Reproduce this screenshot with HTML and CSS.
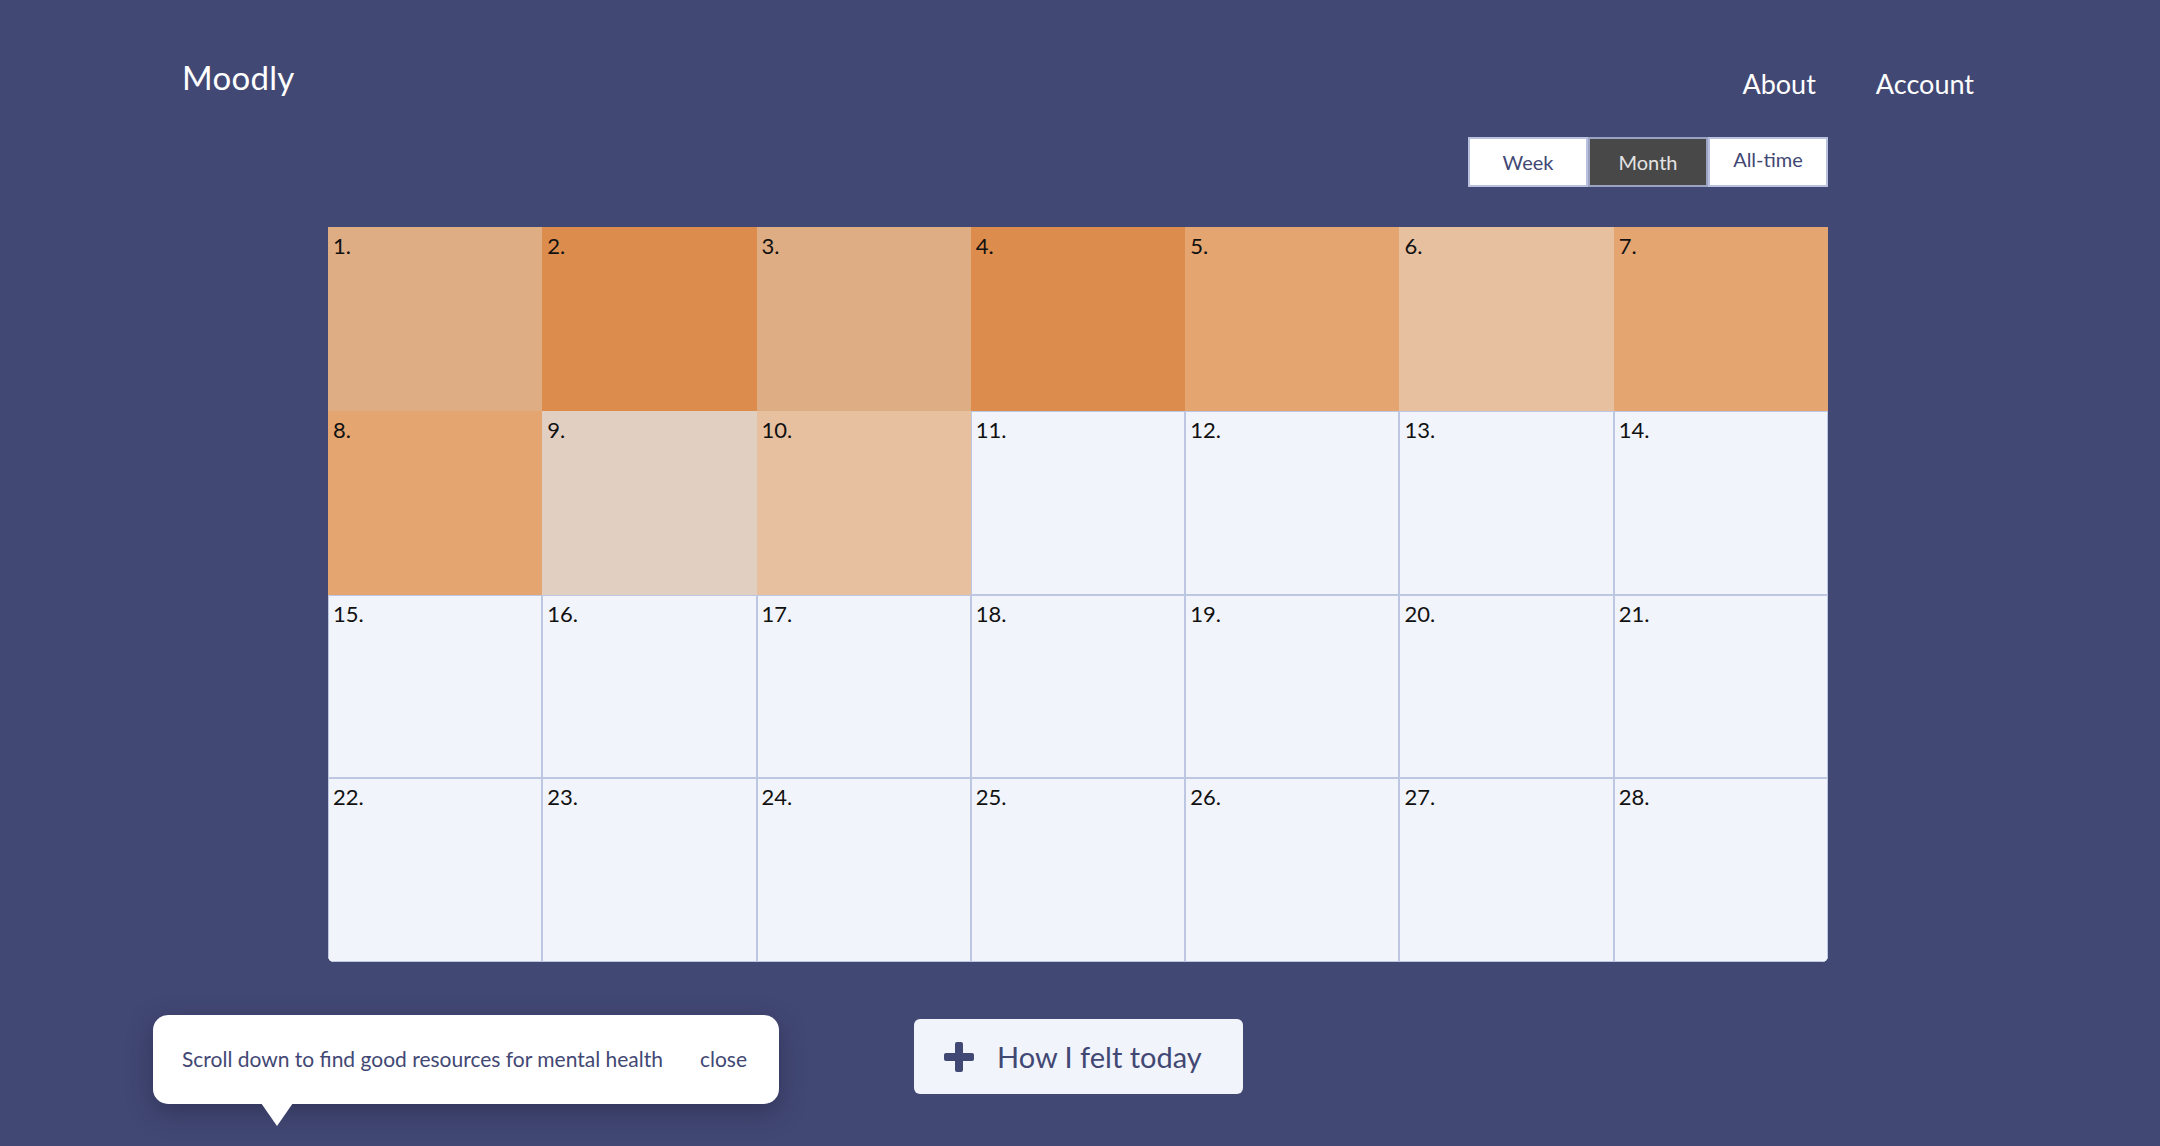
FILE: index.html
```html
<!DOCTYPE html>
<html lang="en">
<head>
<meta charset="utf-8">
<title>Moodly</title>
<link rel="stylesheet" href="styles.css">
</head>
<body>
<header class="header">
  <div class="logo">Moodly</div>
  <nav class="nav">
    <a class="nav-link" href="#">About</a>
    <a class="nav-link" href="#">Account</a>
  </nav>
</header>

<div class="range-row">
  <div class="range">
    <button class="range-btn">Week</button>
    <button class="range-btn active">Month</button>
    <button class="range-btn alltime">All-time</button>
  </div>
</div>

<main class="calendar">
  <div class="day m-light">1.</div>
  <div class="day m-dark">2.</div>
  <div class="day m-light">3.</div>
  <div class="day m-dark">4.</div>
  <div class="day m-mid">5.</div>
  <div class="day m-pale">6.</div>
  <div class="day m-mid">7.</div>
  <div class="day m-mid">8.</div>
  <div class="day m-grey">9.</div>
  <div class="day m-pale">10.</div>
  <div class="day">11.</div>
  <div class="day">12.</div>
  <div class="day">13.</div>
  <div class="day">14.</div>
  <div class="day">15.</div>
  <div class="day">16.</div>
  <div class="day">17.</div>
  <div class="day">18.</div>
  <div class="day">19.</div>
  <div class="day">20.</div>
  <div class="day">21.</div>
  <div class="day">22.</div>
  <div class="day">23.</div>
  <div class="day">24.</div>
  <div class="day">25.</div>
  <div class="day">26.</div>
  <div class="day">27.</div>
  <div class="day">28.</div>
</main>

<section class="bottom-row">
  <div class="tip">
    <span class="tip-text">Scroll down to find good resources for mental health</span>
    <a class="tip-close" href="#">close</a>
  </div>
  <button class="add-btn">
    <svg class="plus" width="30" height="30" viewBox="0 0 30 30" aria-hidden="true">
      <rect x="11" y="0" width="8" height="30" rx="2" fill="#424874"/>
      <rect x="0" y="11" width="30" height="8" rx="2" fill="#424874"/>
    </svg>
    <span>How I felt today</span>
  </button>
</section>
</body>
</html>
```

FILE: styles.css
```css
html, body {
  margin: 0;
  padding: 0;
}

body {
  background: #424874;
  font-family: "Lato", "Noto Sans", sans-serif;
  color: #ffffff;
  width: 2160px;
  min-height: 1146px;
  overflow: hidden;
}

.header {
  display: flex;
  justify-content: space-between;
  align-items: flex-start;
  padding: 57px 186px 0 182px;
  height: 85px;
  box-sizing: border-box;
}

.logo {
  font-size: 33px;
  line-height: 40px;
  letter-spacing: 0.3px;
}

.nav {
  display: flex;
  gap: 60px;
  margin-top: 9px;
}

.nav-link {
  color: #ffffff;
  text-decoration: none;
  font-size: 27px;
  line-height: 36px;
}

.range-row {
  display: flex;
  justify-content: flex-end;
  padding-right: 332px;
  margin-top: 52px;
}

.range {
  display: flex;
}

.range-btn {
  width: 120px;
  height: 50px;
  box-sizing: border-box;
  border: 2px solid #b9c1de;
  background: #ffffff;
  color: #424874;
  font-family: inherit;
  font-size: 20px;
  padding: 0;
  margin: 0;
}

.range-btn.active {
  background: #484848;
  color: #e4e4e4;
  border-color: #9aa3c2;
}

.range-btn.alltime {
  padding-bottom: 6px;
}

.calendar {
  display: grid;
  grid-template-columns: repeat(7, 1fr);
  grid-auto-rows: 183.75px;
  width: 1500px;
  margin: 40px 0 0 328px;
  background: #f1f4fa;
  border-radius: 0 0 6px 6px;
  overflow: hidden;
}

.day {
  box-sizing: border-box;
  border: 1px solid #bdc7e2;
  background: #f1f4fa;
  color: #111111;
  font-size: 22px;
  line-height: 26px;
  padding: 5px 4px 0;
}

.m-light { background: #dead84; border-color: #dead84; }
.m-dark  { background: #dc8c4c; border-color: #dc8c4c; }
.m-mid   { background: #e4a570; border-color: #e4a570; }
.m-pale  { background: #e7c0a0; border-color: #e7c0a0; }
.m-grey  { background: #e1d0c1; border-color: #e1d0c1; }

.bottom-row {
  display: flex;
  align-items: flex-start;
  margin-top: 53px;
  padding-left: 153px;
  gap: 135px;
}

.tip {
  position: relative;
  display: flex;
  align-items: center;
  justify-content: space-between;
  width: 626px;
  height: 89px;
  box-sizing: border-box;
  padding: 0 32px 2px 29px;
  background: #ffffff;
  border-radius: 15px;
  box-shadow: 0 8px 26px rgba(30, 32, 60, 0.45);
  color: #424874;
  font-size: 21px;
}

.tip::after {
  content: "";
  position: absolute;
  left: 108px;
  top: 88px;
  border-left: 16px solid transparent;
  border-right: 16px solid transparent;
  border-top: 23px solid #ffffff;
}

.tip-close {
  color: #424874;
  text-decoration: none;
}

.add-btn {
  display: flex;
  align-items: center;
  gap: 23px;
  width: 329px;
  height: 75px;
  box-sizing: border-box;
  padding: 0 0 0 30px;
  margin: 4px 0 0;
  border: none;
  border-radius: 6px;
  background: #f1f4fa;
  color: #424874;
  font-family: inherit;
  font-size: 29px;
}

.plus {
  display: block;
  flex: none;
}
```
